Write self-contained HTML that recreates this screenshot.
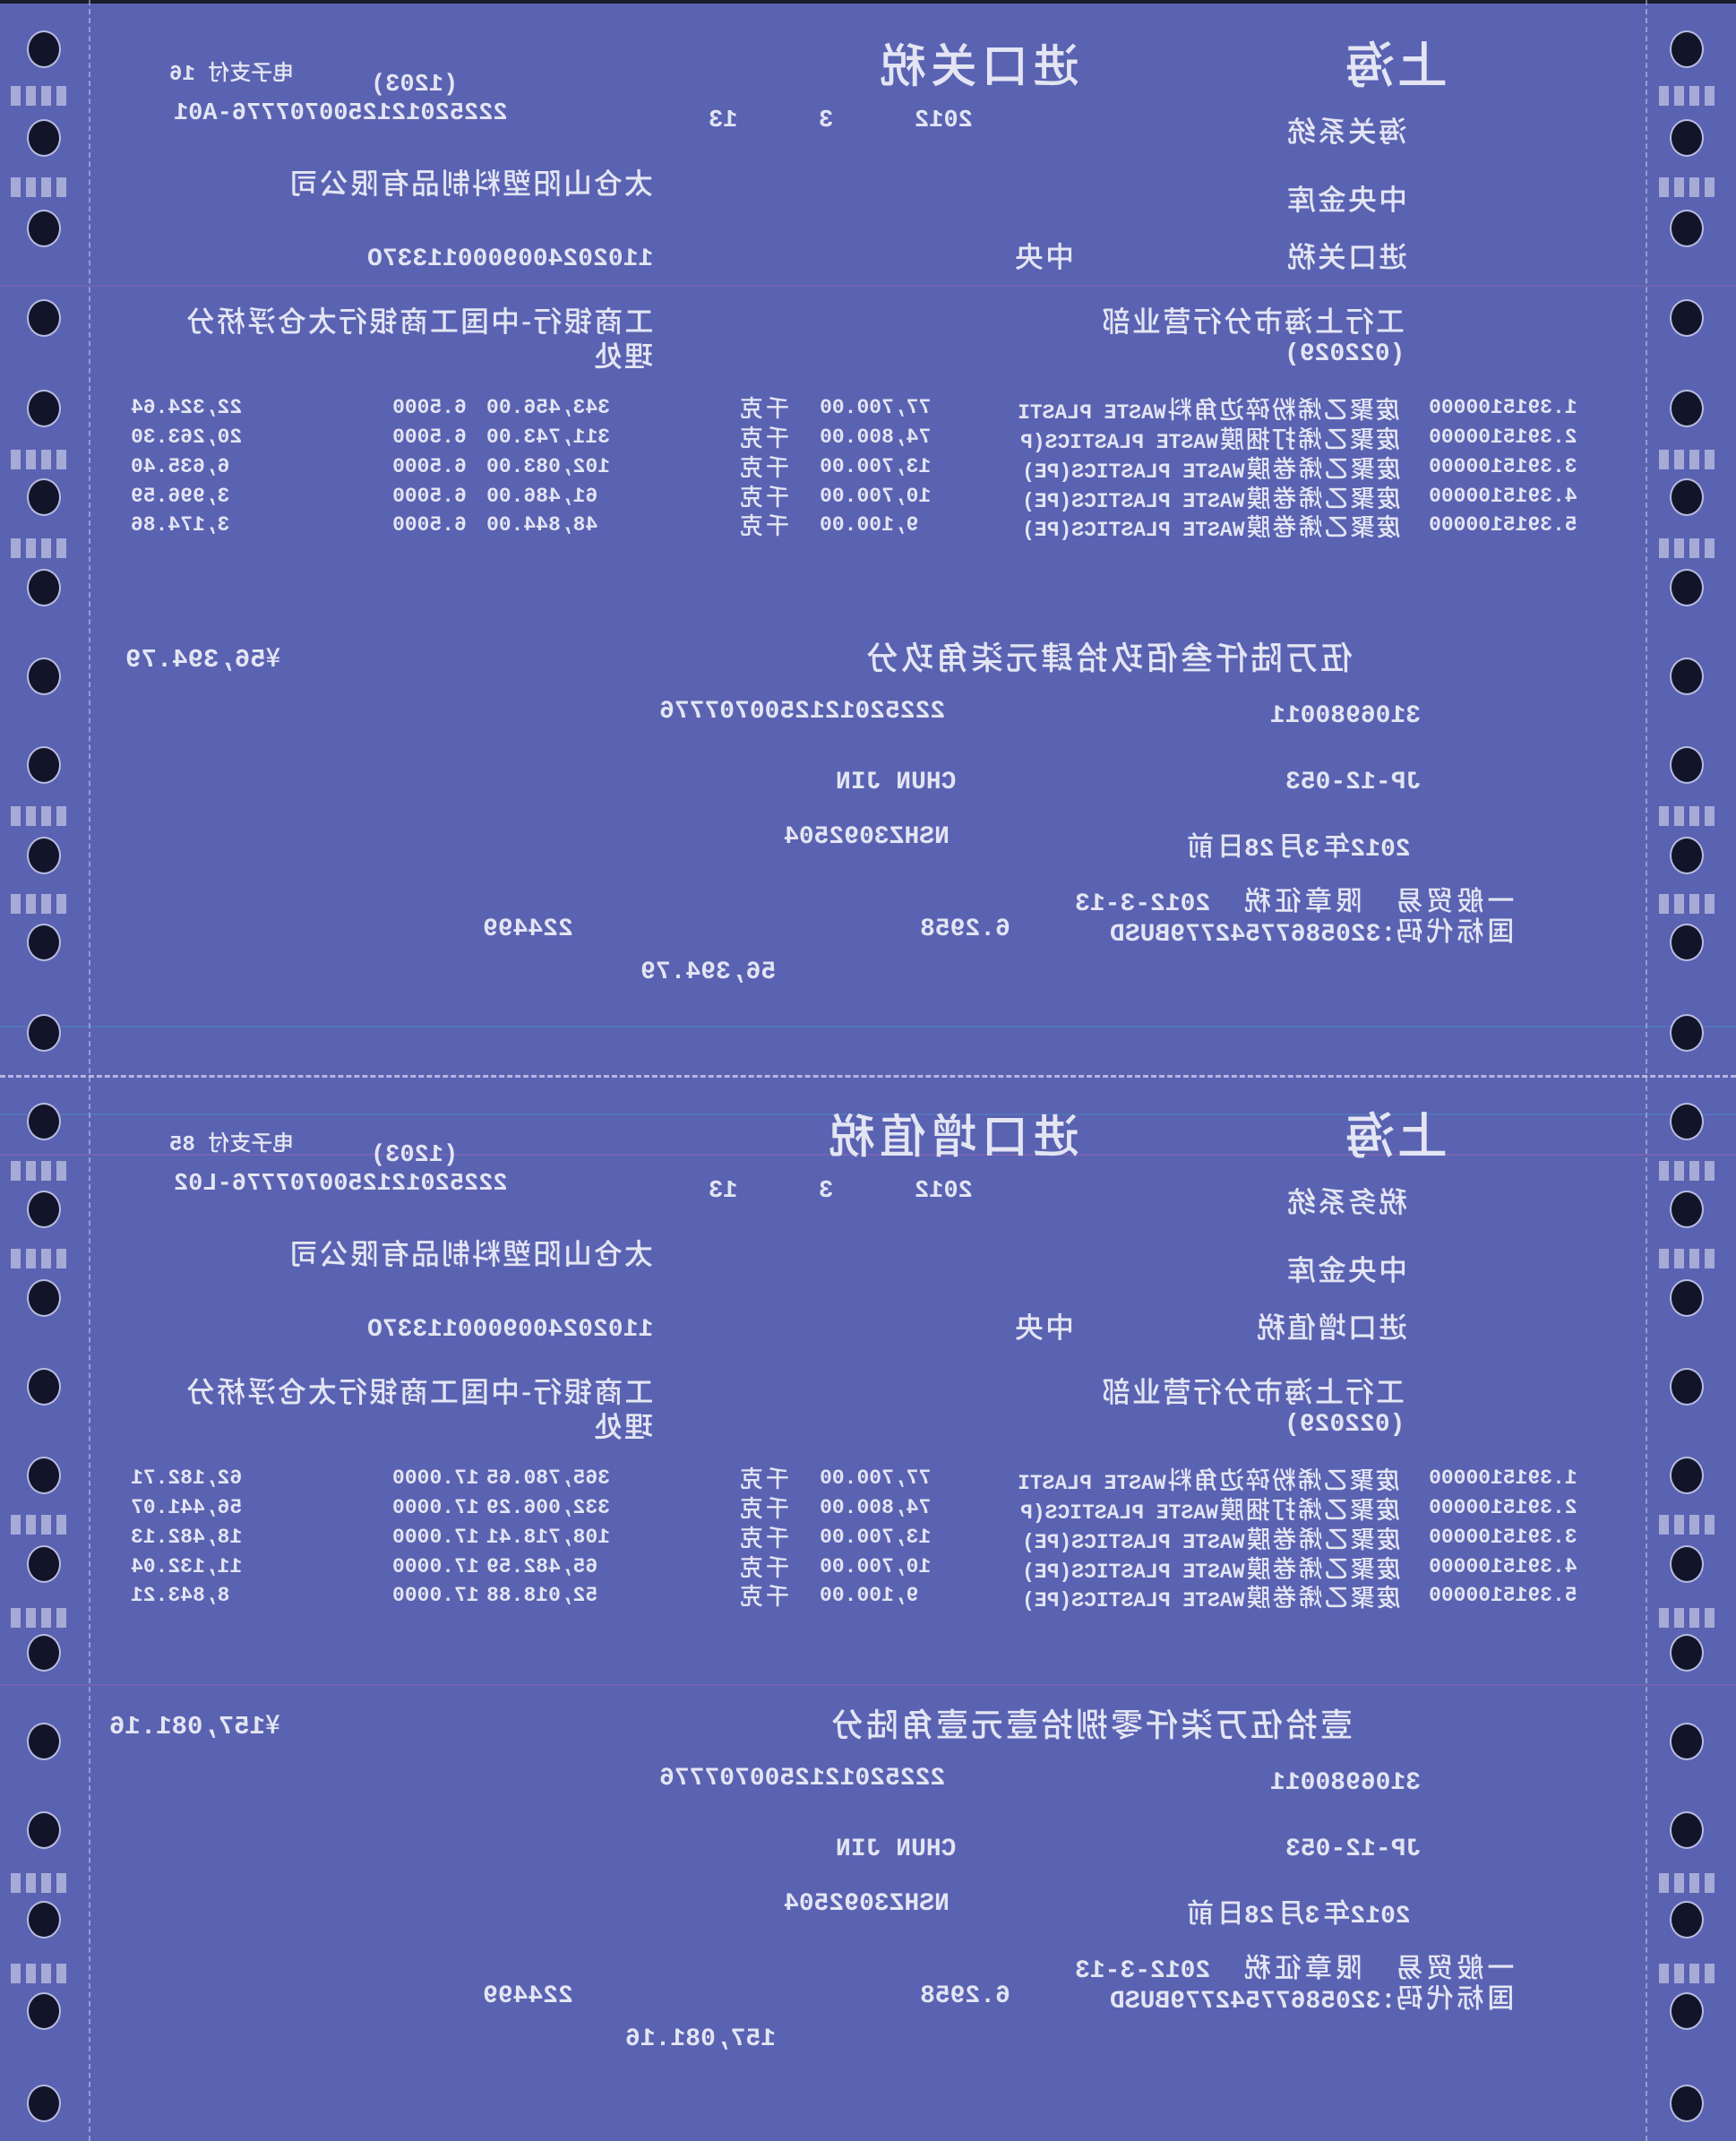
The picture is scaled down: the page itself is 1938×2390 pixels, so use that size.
<!DOCTYPE html>
<html><head><meta charset="utf-8"><style>
html,body{margin:0;padding:0}
body{width:1938px;height:2390px;background:#5a62b2;position:relative;overflow:hidden;font-family:"Liberation Mono","Noto Sans CJK SC",monospace;color:#e3e5f3}
.t{position:absolute;transform:scaleX(-1);white-space:pre;line-height:1;font-weight:bold}
.c{font-family:"Noto Sans CJK SC",sans-serif;font-weight:500}
.h{position:absolute;width:34px;height:38px;border-radius:50%;background:#12142a;box-shadow:0 0 0 2px #b8bce0}
.m{position:absolute;width:64px;height:22px;background:repeating-linear-gradient(90deg,rgba(216,219,238,.6) 0 11px,transparent 11px 17px)}
.vl{position:absolute;top:0;width:0;height:2390px;border-left:2px dashed rgba(225,228,245,.45)}
.hl{position:absolute;left:0;width:1938px;height:2px}
</style></head><body>
<div style="position:absolute;left:0;top:0;width:1938px;height:4px;background:#1a1c2a"></div>
<div class="vl" style="left:99px"></div>
<div class="vl" style="left:1837px"></div>
<div class="hl" style="top:1200px;border-top:3px dashed rgba(230,232,245,.65);height:0"></div>
<div class="hl" style="top:1145px;background:rgba(60,190,200,.2)"></div>
<div class="hl" style="top:1243px;background:rgba(60,190,200,.2)"></div>
<div class="hl" style="top:1288px;background:rgba(200,110,170,.25)"></div>
<div class="hl" style="top:318px;background:rgba(200,110,170,.2)"></div>
<div class="hl" style="top:1880px;background:rgba(200,110,170,.2)"></div>

<div class="h" style="left:32px;top:36px"></div><div class="h" style="left:1866px;top:36px"></div>
<div class="h" style="left:32px;top:135px"></div><div class="h" style="left:1866px;top:135px"></div>
<div class="h" style="left:32px;top:236px"></div><div class="h" style="left:1866px;top:236px"></div>
<div class="h" style="left:32px;top:336px"></div><div class="h" style="left:1866px;top:336px"></div>
<div class="h" style="left:32px;top:437px"></div><div class="h" style="left:1866px;top:437px"></div>
<div class="h" style="left:32px;top:536px"></div><div class="h" style="left:1866px;top:536px"></div>
<div class="h" style="left:32px;top:637px"></div><div class="h" style="left:1866px;top:637px"></div>
<div class="h" style="left:32px;top:736px"></div><div class="h" style="left:1866px;top:736px"></div>
<div class="h" style="left:32px;top:835px"></div><div class="h" style="left:1866px;top:835px"></div>
<div class="h" style="left:32px;top:936px"></div><div class="h" style="left:1866px;top:936px"></div>
<div class="h" style="left:32px;top:1033px"></div><div class="h" style="left:1866px;top:1033px"></div>
<div class="h" style="left:32px;top:1134px"></div><div class="h" style="left:1866px;top:1134px"></div>
<div class="h" style="left:32px;top:1233px"></div><div class="h" style="left:1866px;top:1233px"></div>
<div class="h" style="left:32px;top:1331px"></div><div class="h" style="left:1866px;top:1331px"></div>
<div class="h" style="left:32px;top:1430px"></div><div class="h" style="left:1866px;top:1430px"></div>
<div class="h" style="left:32px;top:1529px"></div><div class="h" style="left:1866px;top:1529px"></div>
<div class="h" style="left:32px;top:1628px"></div><div class="h" style="left:1866px;top:1628px"></div>
<div class="h" style="left:32px;top:1727px"></div><div class="h" style="left:1866px;top:1727px"></div>
<div class="h" style="left:32px;top:1826px"></div><div class="h" style="left:1866px;top:1826px"></div>
<div class="h" style="left:32px;top:1925px"></div><div class="h" style="left:1866px;top:1925px"></div>
<div class="h" style="left:32px;top:2024px"></div><div class="h" style="left:1866px;top:2024px"></div>
<div class="h" style="left:32px;top:2124px"></div><div class="h" style="left:1866px;top:2124px"></div>
<div class="h" style="left:32px;top:2226px"></div><div class="h" style="left:1866px;top:2226px"></div>
<div class="h" style="left:32px;top:2329px"></div><div class="h" style="left:1866px;top:2329px"></div>
<div class="m" style="left:12px;top:96px"></div><div class="m" style="left:1852px;top:96px"></div>
<div class="m" style="left:12px;top:198px"></div><div class="m" style="left:1852px;top:198px"></div>
<div class="m" style="left:12px;top:502px"></div><div class="m" style="left:1852px;top:502px"></div>
<div class="m" style="left:12px;top:601px"></div><div class="m" style="left:1852px;top:601px"></div>
<div class="m" style="left:12px;top:900px"></div><div class="m" style="left:1852px;top:900px"></div>
<div class="m" style="left:12px;top:998px"></div><div class="m" style="left:1852px;top:998px"></div>
<div class="m" style="left:12px;top:1296px"></div><div class="m" style="left:1852px;top:1296px"></div>
<div class="m" style="left:12px;top:1394px"></div><div class="m" style="left:1852px;top:1394px"></div>
<div class="m" style="left:12px;top:1691px"></div><div class="m" style="left:1852px;top:1691px"></div>
<div class="m" style="left:12px;top:1795px"></div><div class="m" style="left:1852px;top:1795px"></div>
<div class="m" style="left:12px;top:2091px"></div><div class="m" style="left:1852px;top:2091px"></div>
<div class="m" style="left:12px;top:2192px"></div><div class="m" style="left:1852px;top:2192px"></div>

<!-- TOP HALF -->
<div class="t" style="right:1610px;top:67px;font-size:24px"><span class="c">电子支付</span> 16</div>
<div class="t" style="right:1427px;top:82px;font-size:27px">(1203)</div>
<div class="t" style="right:1371px;top:114px;font-size:27px">2225201212500707776-A01</div>
<div class="t" style="right:1115px;top:122px;font-size:27px">13</div>
<div class="t" style="right:1008px;top:122px;font-size:27px">3</div>
<div class="t" style="right:852px;top:122px;font-size:27px">2012</div>
<div class="t c" style="right:733px;top:44px;font-size:52px;letter-spacing:5px">进口关税</div>
<div class="t c" style="right:322px;top:42px;font-size:56px;letter-spacing:2px">上海</div>
<div class="t c" style="right:367px;top:129px;font-size:32px;letter-spacing:2px">海关系统</div>
<div class="t c" style="right:1209px;top:187px;font-size:32px;letter-spacing:2px">太仓山阳塑料制品有限公司</div>
<div class="t c" style="right:367px;top:205px;font-size:32px;letter-spacing:2px">中央金库</div>
<div class="t" style="right:1209px;top:276px;font-size:28px">110202400900011337O</div>
<div class="t c" style="right:739px;top:269px;font-size:32px;letter-spacing:2px">中央</div>
<div class="t c" style="right:367px;top:269px;font-size:32px;letter-spacing:2px">进口关税</div>
<div class="t c" style="right:1209px;top:341px;font-size:32px;letter-spacing:2px">工商银行-中国工商银行太仓浮桥分</div>
<div class="t c" style="right:1209px;top:380px;font-size:32px;letter-spacing:2px">理处</div>
<div class="t c" style="right:370px;top:341px;font-size:32px;letter-spacing:2px">工行上海市分行营业部</div>
<div class="t" style="right:370px;top:382px;font-size:28px">(022029)</div>

<div class="t" style="right:177px;top:444px;font-size:23px">1.3915100000</div>
<div class="t" style="right:177px;top:477px;font-size:23px">2.3915100000</div>
<div class="t" style="right:177px;top:510px;font-size:23px">3.3915100000</div>
<div class="t" style="right:177px;top:543px;font-size:23px">4.3915100000</div>
<div class="t" style="right:177px;top:575px;font-size:23px">5.3915100000</div>
<div class="t" style="right:375px;top:442px;font-size:23px"><span class="c" style="font-size:27px;letter-spacing:2px">废聚乙烯粉碎边角料</span>WASTE PLASTI</div>
<div class="t" style="right:375px;top:475px;font-size:23px"><span class="c" style="font-size:27px;letter-spacing:2px">废聚乙烯打捆膜</span>WASTE PLASTICS(P</div>
<div class="t" style="right:375px;top:508px;font-size:23px"><span class="c" style="font-size:27px;letter-spacing:2px">废聚乙烯卷膜</span>WASTE PLASTICS(PE)</div>
<div class="t" style="right:375px;top:541px;font-size:23px"><span class="c" style="font-size:27px;letter-spacing:2px">废聚乙烯卷膜</span>WASTE PLASTICS(PE)</div>
<div class="t" style="right:375px;top:573px;font-size:23px"><span class="c" style="font-size:27px;letter-spacing:2px">废聚乙烯卷膜</span>WASTE PLASTICS(PE)</div>
<div class="t" style="left:915px;top:444px;font-size:23px">77,700.00</div>
<div class="t" style="left:915px;top:477px;font-size:23px">74,800.00</div>
<div class="t" style="left:915px;top:510px;font-size:23px">13,700.00</div>
<div class="t" style="left:915px;top:543px;font-size:23px">10,700.00</div>
<div class="t" style="left:915px;top:575px;font-size:23px">9,100.00</div>
<div class="t c" style="left:823px;top:442px;font-size:26px;letter-spacing:3px">千克</div>
<div class="t c" style="left:823px;top:475px;font-size:26px;letter-spacing:3px">千克</div>
<div class="t c" style="left:823px;top:508px;font-size:26px;letter-spacing:3px">千克</div>
<div class="t c" style="left:823px;top:541px;font-size:26px;letter-spacing:3px">千克</div>
<div class="t c" style="left:823px;top:573px;font-size:26px;letter-spacing:3px">千克</div>
<div class="t" style="left:543px;top:444px;font-size:23px">343,456.00</div>
<div class="t" style="left:543px;top:477px;font-size:23px">311,743.00</div>
<div class="t" style="left:543px;top:510px;font-size:23px">102,083.00</div>
<div class="t" style="left:543px;top:543px;font-size:23px">61,486.00</div>
<div class="t" style="left:543px;top:575px;font-size:23px">48,844.00</div>
<div class="t" style="left:438px;top:444px;font-size:23px">6.5000</div>
<div class="t" style="left:438px;top:477px;font-size:23px">6.5000</div>
<div class="t" style="left:438px;top:510px;font-size:23px">6.5000</div>
<div class="t" style="left:438px;top:543px;font-size:23px">6.5000</div>
<div class="t" style="left:438px;top:575px;font-size:23px">6.5000</div>
<div class="t" style="left:146px;top:444px;font-size:23px">22,324.64</div>
<div class="t" style="left:146px;top:477px;font-size:23px">20,263.30</div>
<div class="t" style="left:146px;top:510px;font-size:23px">6,635.40</div>
<div class="t" style="left:146px;top:543px;font-size:23px">3,996.59</div>
<div class="t" style="left:146px;top:575px;font-size:23px">3,174.86</div>

<div class="t c" style="right:428px;top:714px;font-size:36px;letter-spacing:3px">伍万陆仟叁佰玖拾肆元柒角玖分</div>
<div class="t" style="right:1625px;top:718px;font-size:29px"><span class="c">¥</span>56,394.79</div>
<div class="t" style="right:352px;top:786px;font-size:28px">3106980011</div>
<div class="t" style="right:883px;top:781px;font-size:28px">2225201212500707776</div>
<div class="t" style="right:352px;top:860px;font-size:28px">JP-12-053</div>
<div class="t" style="right:871px;top:860px;font-size:28px">CHUN JIN</div>
<div class="t" style="right:363px;top:927px;font-size:28px">2012<span class="c" style="font-size:30px;letter-spacing:4px">年</span>3<span class="c" style="font-size:30px;letter-spacing:4px">月</span>28<span class="c" style="font-size:30px;letter-spacing:4px">日前</span></div>
<div class="t" style="right:878px;top:921px;font-size:28px">NSHZ3092504</div>
<div class="t" style="right:248px;top:988px;font-size:28px"><span class="c" style="font-size:30px;letter-spacing:4px">一般贸易</span>  <span class="c" style="font-size:30px;letter-spacing:4px">限章征税</span>  2012-3-13</div>
<div class="t" style="right:248px;top:1022px;font-size:28px"><span class="c" style="font-size:30px;letter-spacing:4px">国标代码:</span>32058677542779BUSD</div>
<div class="t" style="right:810px;top:1024px;font-size:28px">6.2958</div>
<div class="t" style="right:1298px;top:1024px;font-size:28px">224499</div>
<div class="t" style="right:1072px;top:1072px;font-size:28px">56,394.79</div>

<!-- BOTTOM HALF -->
<div class="t" style="right:1610px;top:1262px;font-size:24px"><span class="c">电子支付</span> 85</div>
<div class="t" style="right:1427px;top:1277px;font-size:27px">(1203)</div>
<div class="t" style="right:1371px;top:1309px;font-size:27px">2225201212500707776-L02</div>
<div class="t" style="right:1115px;top:1317px;font-size:27px">13</div>
<div class="t" style="right:1008px;top:1317px;font-size:27px">3</div>
<div class="t" style="right:852px;top:1317px;font-size:27px">2012</div>
<div class="t c" style="right:733px;top:1239px;font-size:52px;letter-spacing:5px">进口增值税</div>
<div class="t c" style="right:322px;top:1237px;font-size:56px;letter-spacing:2px">上海</div>
<div class="t c" style="right:367px;top:1324px;font-size:32px;letter-spacing:2px">税务系统</div>
<div class="t c" style="right:1209px;top:1382px;font-size:32px;letter-spacing:2px">太仓山阳塑料制品有限公司</div>
<div class="t c" style="right:367px;top:1400px;font-size:32px;letter-spacing:2px">中央金库</div>
<div class="t" style="right:1209px;top:1471px;font-size:28px">110202400900011337O</div>
<div class="t c" style="right:739px;top:1464px;font-size:32px;letter-spacing:2px">中央</div>
<div class="t c" style="right:367px;top:1464px;font-size:32px;letter-spacing:2px">进口增值税</div>
<div class="t c" style="right:1209px;top:1536px;font-size:32px;letter-spacing:2px">工商银行-中国工商银行太仓浮桥分</div>
<div class="t c" style="right:1209px;top:1575px;font-size:32px;letter-spacing:2px">理处</div>
<div class="t c" style="right:370px;top:1536px;font-size:32px;letter-spacing:2px">工行上海市分行营业部</div>
<div class="t" style="right:370px;top:1577px;font-size:28px">(022029)</div>

<div class="t" style="right:177px;top:1639px;font-size:23px">1.3915100000</div>
<div class="t" style="right:177px;top:1672px;font-size:23px">2.3915100000</div>
<div class="t" style="right:177px;top:1705px;font-size:23px">3.3915100000</div>
<div class="t" style="right:177px;top:1738px;font-size:23px">4.3915100000</div>
<div class="t" style="right:177px;top:1770px;font-size:23px">5.3915100000</div>
<div class="t" style="right:375px;top:1637px;font-size:23px"><span class="c" style="font-size:27px;letter-spacing:2px">废聚乙烯粉碎边角料</span>WASTE PLASTI</div>
<div class="t" style="right:375px;top:1670px;font-size:23px"><span class="c" style="font-size:27px;letter-spacing:2px">废聚乙烯打捆膜</span>WASTE PLASTICS(P</div>
<div class="t" style="right:375px;top:1703px;font-size:23px"><span class="c" style="font-size:27px;letter-spacing:2px">废聚乙烯卷膜</span>WASTE PLASTICS(PE)</div>
<div class="t" style="right:375px;top:1736px;font-size:23px"><span class="c" style="font-size:27px;letter-spacing:2px">废聚乙烯卷膜</span>WASTE PLASTICS(PE)</div>
<div class="t" style="right:375px;top:1768px;font-size:23px"><span class="c" style="font-size:27px;letter-spacing:2px">废聚乙烯卷膜</span>WASTE PLASTICS(PE)</div>
<div class="t" style="left:915px;top:1639px;font-size:23px">77,700.00</div>
<div class="t" style="left:915px;top:1672px;font-size:23px">74,800.00</div>
<div class="t" style="left:915px;top:1705px;font-size:23px">13,700.00</div>
<div class="t" style="left:915px;top:1738px;font-size:23px">10,700.00</div>
<div class="t" style="left:915px;top:1770px;font-size:23px">9,100.00</div>
<div class="t c" style="left:823px;top:1637px;font-size:26px;letter-spacing:3px">千克</div>
<div class="t c" style="left:823px;top:1670px;font-size:26px;letter-spacing:3px">千克</div>
<div class="t c" style="left:823px;top:1703px;font-size:26px;letter-spacing:3px">千克</div>
<div class="t c" style="left:823px;top:1736px;font-size:26px;letter-spacing:3px">千克</div>
<div class="t c" style="left:823px;top:1768px;font-size:26px;letter-spacing:3px">千克</div>
<div class="t" style="left:543px;top:1639px;font-size:23px">365,780.65</div>
<div class="t" style="left:543px;top:1672px;font-size:23px">332,006.29</div>
<div class="t" style="left:543px;top:1705px;font-size:23px">108,718.41</div>
<div class="t" style="left:543px;top:1738px;font-size:23px">65,482.59</div>
<div class="t" style="left:543px;top:1770px;font-size:23px">52,018.88</div>
<div class="t" style="left:438px;top:1639px;font-size:23px">17.0000</div>
<div class="t" style="left:438px;top:1672px;font-size:23px">17.0000</div>
<div class="t" style="left:438px;top:1705px;font-size:23px">17.0000</div>
<div class="t" style="left:438px;top:1738px;font-size:23px">17.0000</div>
<div class="t" style="left:438px;top:1770px;font-size:23px">17.0000</div>
<div class="t" style="left:146px;top:1639px;font-size:23px">62,182.71</div>
<div class="t" style="left:146px;top:1672px;font-size:23px">56,441.07</div>
<div class="t" style="left:146px;top:1705px;font-size:23px">18,482.13</div>
<div class="t" style="left:146px;top:1738px;font-size:23px">11,132.04</div>
<div class="t" style="left:146px;top:1770px;font-size:23px">8,843.21</div>

<div class="t c" style="right:428px;top:1905px;font-size:36px;letter-spacing:3px">壹拾伍万柒仟零捌拾壹元壹角陆分</div>
<div class="t" style="right:1625px;top:1909px;font-size:29px"><span class="c">¥</span>157,081.16</div>
<div class="t" style="right:352px;top:1977px;font-size:28px">3106980011</div>
<div class="t" style="right:883px;top:1972px;font-size:28px">2225201212500707776</div>
<div class="t" style="right:352px;top:2051px;font-size:28px">JP-12-053</div>
<div class="t" style="right:871px;top:2051px;font-size:28px">CHUN JIN</div>
<div class="t" style="right:363px;top:2118px;font-size:28px">2012<span class="c" style="font-size:30px;letter-spacing:4px">年</span>3<span class="c" style="font-size:30px;letter-spacing:4px">月</span>28<span class="c" style="font-size:30px;letter-spacing:4px">日前</span></div>
<div class="t" style="right:878px;top:2112px;font-size:28px">NSHZ3092504</div>
<div class="t" style="right:248px;top:2179px;font-size:28px"><span class="c" style="font-size:30px;letter-spacing:4px">一般贸易</span>  <span class="c" style="font-size:30px;letter-spacing:4px">限章征税</span>  2012-3-13</div>
<div class="t" style="right:248px;top:2213px;font-size:28px"><span class="c" style="font-size:30px;letter-spacing:4px">国标代码:</span>32058677542779BUSD</div>
<div class="t" style="right:810px;top:2215px;font-size:28px">6.2958</div>
<div class="t" style="right:1298px;top:2215px;font-size:28px">224499</div>
<div class="t" style="right:1072px;top:2263px;font-size:28px">157,081.16</div>
</body></html>
